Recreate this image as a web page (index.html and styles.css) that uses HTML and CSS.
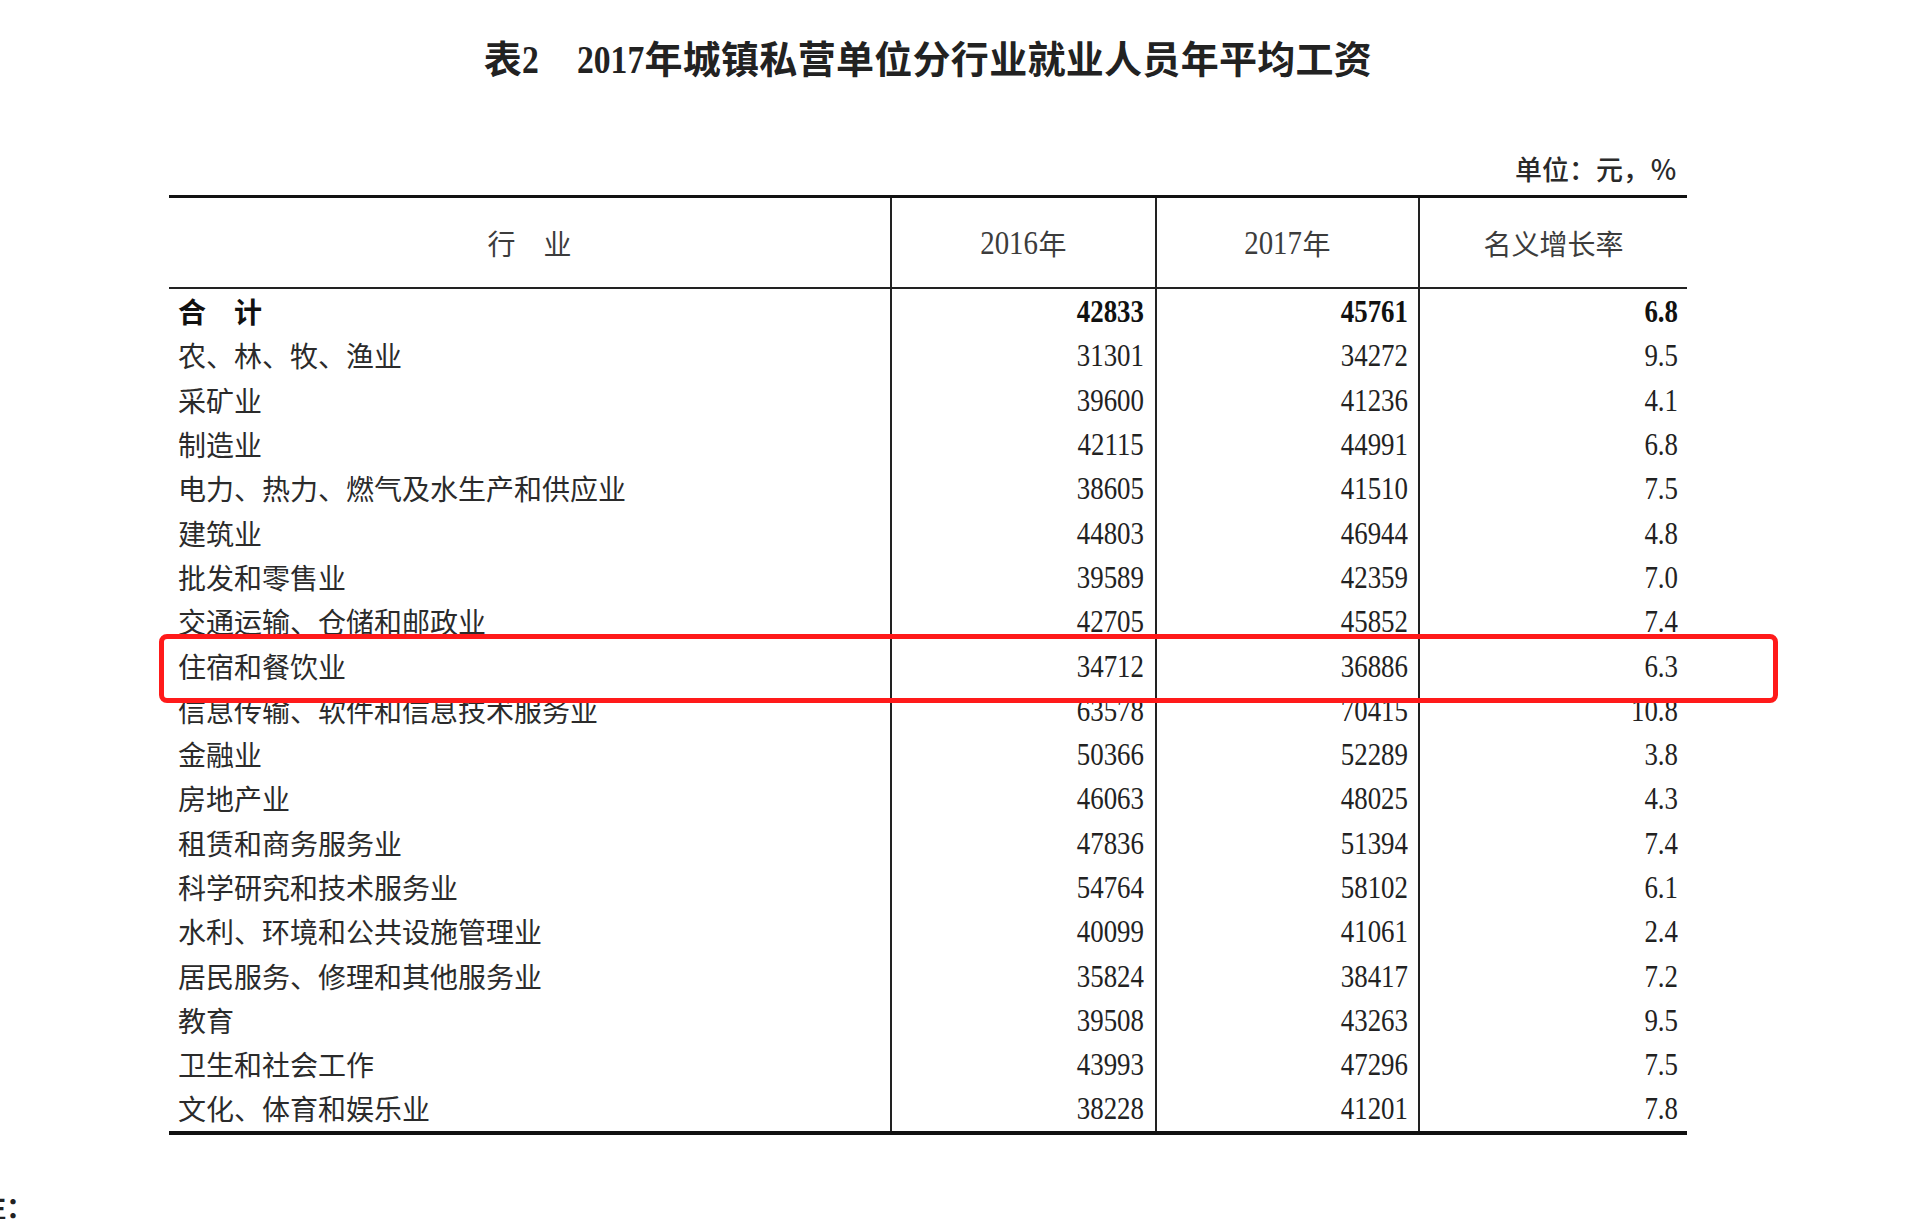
FILE: index.html
```html
<!DOCTYPE html>
<html lang="zh-CN">
<head>
<meta charset="utf-8">
<title>表2 2017年城镇私营单位分行业就业人员年平均工资</title>
<link rel="stylesheet" href="styles.css">
</head>
<body>
<div class="page">
  <h1 class="title">表<span class="tn one">2</span>　<span class="tn four">2017</span>年城镇私营单位分行业就业人员年平均工资</h1>
  <div class="unit">单位：元，％</div>
  <div class="table">
    <div class="row head">
      <div class="cell">行　业</div>
      <div class="cell"><span class="hn">2016</span>年</div>
      <div class="cell"><span class="hn">2017</span>年</div>
      <div class="cell">名义增长率</div>
    </div>
    <div class="row total">
      <div class="cell label">合　计</div>
      <div class="cell num"><span>42833</span></div>
      <div class="cell num"><span>45761</span></div>
      <div class="cell num"><span>6.8</span></div>
    </div>
    <div class="row"><div class="cell label">农、林、牧、渔业</div><div class="cell num"><span>31301</span></div><div class="cell num"><span>34272</span></div><div class="cell num"><span>9.5</span></div></div>
    <div class="row"><div class="cell label">采矿业</div><div class="cell num"><span>39600</span></div><div class="cell num"><span>41236</span></div><div class="cell num"><span>4.1</span></div></div>
    <div class="row"><div class="cell label">制造业</div><div class="cell num"><span>42115</span></div><div class="cell num"><span>44991</span></div><div class="cell num"><span>6.8</span></div></div>
    <div class="row"><div class="cell label">电力、热力、燃气及水生产和供应业</div><div class="cell num"><span>38605</span></div><div class="cell num"><span>41510</span></div><div class="cell num"><span>7.5</span></div></div>
    <div class="row"><div class="cell label">建筑业</div><div class="cell num"><span>44803</span></div><div class="cell num"><span>46944</span></div><div class="cell num"><span>4.8</span></div></div>
    <div class="row"><div class="cell label">批发和零售业</div><div class="cell num"><span>39589</span></div><div class="cell num"><span>42359</span></div><div class="cell num"><span>7.0</span></div></div>
    <div class="row"><div class="cell label">交通运输、仓储和邮政业</div><div class="cell num"><span>42705</span></div><div class="cell num"><span>45852</span></div><div class="cell num"><span>7.4</span></div></div>
    <div class="row hl"><div class="cell label">住宿和餐饮业</div><div class="cell num"><span>34712</span></div><div class="cell num"><span>36886</span></div><div class="cell num"><span>6.3</span></div></div>
    <div class="row"><div class="cell label">信息传输、软件和信息技术服务业</div><div class="cell num"><span>63578</span></div><div class="cell num"><span>70415</span></div><div class="cell num"><span>10.8</span></div></div>
    <div class="row"><div class="cell label">金融业</div><div class="cell num"><span>50366</span></div><div class="cell num"><span>52289</span></div><div class="cell num"><span>3.8</span></div></div>
    <div class="row"><div class="cell label">房地产业</div><div class="cell num"><span>46063</span></div><div class="cell num"><span>48025</span></div><div class="cell num"><span>4.3</span></div></div>
    <div class="row"><div class="cell label">租赁和商务服务业</div><div class="cell num"><span>47836</span></div><div class="cell num"><span>51394</span></div><div class="cell num"><span>7.4</span></div></div>
    <div class="row"><div class="cell label">科学研究和技术服务业</div><div class="cell num"><span>54764</span></div><div class="cell num"><span>58102</span></div><div class="cell num"><span>6.1</span></div></div>
    <div class="row"><div class="cell label">水利、环境和公共设施管理业</div><div class="cell num"><span>40099</span></div><div class="cell num"><span>41061</span></div><div class="cell num"><span>2.4</span></div></div>
    <div class="row"><div class="cell label">居民服务、修理和其他服务业</div><div class="cell num"><span>35824</span></div><div class="cell num"><span>38417</span></div><div class="cell num"><span>7.2</span></div></div>
    <div class="row"><div class="cell label">教育</div><div class="cell num"><span>39508</span></div><div class="cell num"><span>43263</span></div><div class="cell num"><span>9.5</span></div></div>
    <div class="row"><div class="cell label">卫生和社会工作</div><div class="cell num"><span>43993</span></div><div class="cell num"><span>47296</span></div><div class="cell num"><span>7.5</span></div></div>
    <div class="row"><div class="cell label">文化、体育和娱乐业</div><div class="cell num"><span>38228</span></div><div class="cell num"><span>41201</span></div><div class="cell num"><span>7.8</span></div></div>
  </div>
</div>
<p class="note">注：</p>
</body>
</html>
```
FILE: styles.css
```css
html, body {
  margin: 0;
  padding: 0;
  background: #ffffff;
}
body {
  font-family: "Noto Sans CJK SC", "Noto Sans", sans-serif;
  color: #2b2b2b;
}
.page {
  width: 1518px;
  margin-left: 169px;
}
.title {
  margin: 0;
  padding-top: 32px;
  height: 50px;
  line-height: 50px;
  font-size: 38px;
  font-weight: 700;
  letter-spacing: 0.3px;
  text-align: center;
  color: #222;
  white-space: nowrap;
}
.tn {
  display: inline-block;
  font-family: "Liberation Serif", serif;
  font-size: 40px;
  font-weight: 700;
  letter-spacing: 0;
  transform: scaleX(0.84);
  transform-origin: left center;
}
.tn.one { margin-right: -3px; }
.tn.four { margin-right: -13px; }
.unit {
  margin-top: 70px;
  padding-right: 10px;
  height: 34px;
  line-height: 34px;
  font-size: 27px;
  font-weight: 500;
  text-align: right;
  color: #2a2a2a;
}
.table {
  margin-top: 9px;
  border-top: 3px solid #111;
  border-bottom: 4px solid #111;
}
.row {
  display: grid;
  grid-template-columns: 721px 265px 263px 269px;
  height: 44.3px;
}
.cell {
  box-sizing: border-box;
  display: flex;
  align-items: center;
  height: 100%;
  font-size: 28px;
  line-height: 44px;
  white-space: nowrap;
}
.cell + .cell {
  border-left: 2px solid #222;
}
.row.head {
  height: 89px;
  border-bottom: 2px solid #222;
}
.row.head .cell {
  justify-content: center;
  font-size: 28px;
  color: #3c3c3c;
}
.hn {
  display: inline-block;
  font-family: "Liberation Serif", serif;
  font-size: 34px;
  transform: scaleX(0.85);
  transform-origin: right center;
  margin-left: -10px;
}
.label {
  padding-left: 9px;
}
.num {
  justify-content: flex-end;
  font-family: "Liberation Serif", serif;
  font-size: 32px;
  color: #222;
}
.num span {
  display: inline-block;
  transform: scaleX(0.84);
  transform-origin: right center;
}
.row .cell:nth-child(2) { padding-right: 11px; }
.row .cell:nth-child(3) { padding-right: 10px; }
.row .cell:nth-child(4) { padding-right: 9px; }
.row.head .cell { padding-right: 0; }
.row.total .cell {
  font-weight: 700;
  color: #111;
}
.row.hl {
  position: relative;
  z-index: 1;
}
.row.hl::before {
  content: "";
  position: absolute;
  top: -9px;
  bottom: -15px;
  left: -10px;
  right: -91px;
  border: 5px solid #ff1a1a;
  border-radius: 8px;
  background: #ffffff;
  z-index: -1;
}
.row.hl .cell + .cell {
  position: relative;
}
.row.hl .cell + .cell::before {
  content: "";
  position: absolute;
  left: -2px;
  width: 2px;
  top: -4px;
  bottom: -10px;
  background: #222;
}
.note {
  margin: 53px 0 0 0;
  font-size: 28px;
  line-height: 36px;
  font-weight: 700;
  color: #222;
  text-indent: -22px;
}
```
